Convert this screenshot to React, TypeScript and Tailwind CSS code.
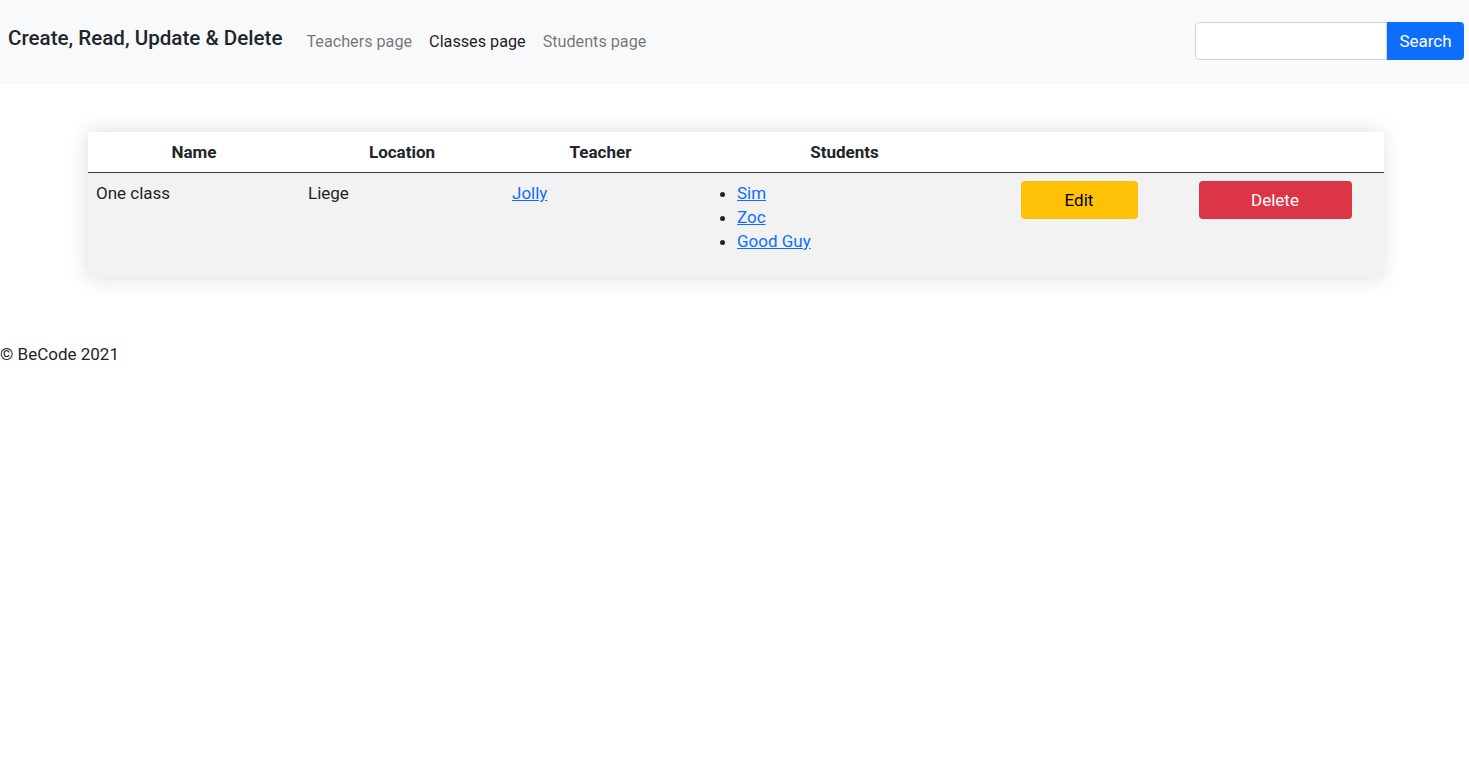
import React from 'react';

const students = ['Sim', 'Zoc', 'Good Guy'];

function Navbar() {
  return (
    <nav className="h-[84px] bg-[#f8f9fa] flex items-center px-2">
      <a href="#" className="text-[20.6px] font-medium text-[#212529] mr-6 -mt-2 leading-[30px]">
        Create, Read, Update &amp; Delete
      </a>
      <ul className="flex items-center gap-[17px] text-[16.2px] leading-6">
        <li><a href="#" className="text-black/55">Teachers page</a></li>
        <li><a href="#" className="text-black/90">Classes page</a></li>
        <li><a href="#" className="text-black/55">Students page</a></li>
      </ul>
      <form className="ml-auto flex items-stretch -mr-[3px] -mt-[3px]">
        <input
          type="text"
          className="w-[192px] h-[38px] bg-white border border-[#ced4da] rounded-l-[4px] px-3 outline-none"
        />
        <button type="button" className="h-[38px] w-[77px] pt-[2px] bg-[#0d6efd] text-white text-[17px] rounded-r-[4px]">
          Search
        </button>
      </form>
    </nav>
  );
}

function ClassesTable() {
  return (
    <div className="mx-[88px] mt-[48px] shadow-[0_0_20px_rgba(0,0,0,0.15)]">
      <table className="w-full table-fixed border-collapse text-[17px] leading-6 text-[#212529]">
        <colgroup>
          <col className="w-[212px]" />
          <col className="w-[204px]" />
          <col className="w-[193px]" />
          <col className="w-[295px]" />
          <col className="w-[174px]" />
          <col className="w-[218px]" />
        </colgroup>
        <thead>
          <tr className="bg-white border-b-[1.5px] border-[#373b3e]">
            <th className="p-2 font-bold text-center">Name</th>
            <th className="p-2 font-bold text-center">Location</th>
            <th className="p-2 font-bold text-center">Teacher</th>
            <th className="p-2 font-bold text-center">Students</th>
            <th className="p-2"></th>
            <th className="p-2"></th>
          </tr>
        </thead>
        <tbody>
          <tr className="bg-[#f2f2f2] align-top">
            <td className="p-2">One class</td>
            <td className="p-2">Liege</td>
            <td className="p-2">
              <a href="#" className="text-[#0d6efd] underline">Jolly</a>
            </td>
            <td className="p-2">
              <ul className="list-disc pl-8 mb-4">
                {students.map(s => (
                  <li key={s}>
                    <a href="#" className="text-[#0d6efd] underline">{s}</a>
                  </li>
                ))}
              </ul>
            </td>
            <td className="p-2 text-center">
              <button className="w-[117px] h-[38px] bg-[#ffc107] text-black rounded-[4px]">Edit</button>
            </td>
            <td className="p-2 text-center">
              <button className="w-[153px] h-[38px] bg-[#dc3545] text-white rounded-[4px]">Delete</button>
            </td>
          </tr>
        </tbody>
      </table>
    </div>
  );
}

export default function App() {
  return (
    <div className="min-h-screen bg-white font-['Roboto','Inter',sans-serif] text-[#212529]">
      <Navbar />
      <ClassesTable />
      <footer className="mt-[65px] text-[17px] leading-6">© BeCode 2021</footer>
    </div>
  );
}
